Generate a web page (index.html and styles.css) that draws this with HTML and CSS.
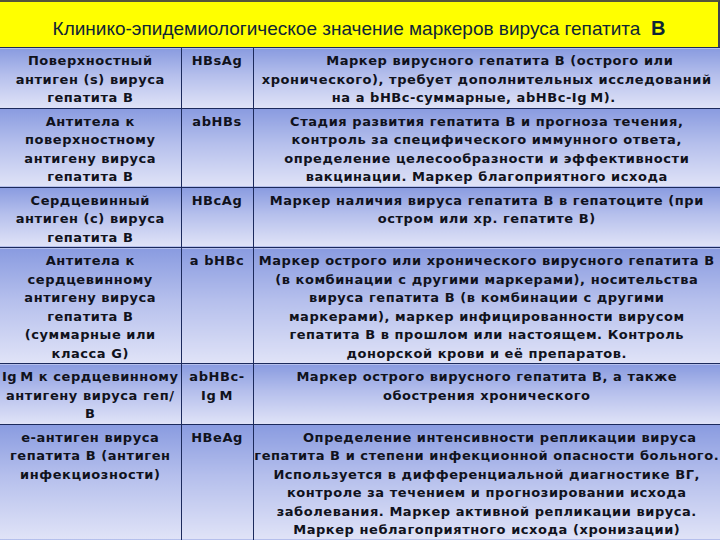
FILE: index.html
```html
<!DOCTYPE html>
<html lang="ru">
<head>
<meta charset="utf-8">
<title>Маркеры вируса гепатита В</title>
<link rel="stylesheet" href="styles.css">
</head>
<body>
<div class="slide">
  <header class="title">Клинико-эпидемиологическое значение маркеров вируса гепатита&nbsp; <b>В</b></header>
  <table class="markers">
    <colgroup>
      <col class="c-name">
      <col class="c-code">
      <col class="c-desc">
    </colgroup>
    <tbody>
      <tr class="r3">
        <td>Поверхностный<br>антиген (s) вируса<br>гепатита В</td>
        <td>HBsAg</td>
        <td><span class="shift">Маркер вирусного гепатита В (острого или</span><br>хронического), требует дополнительных исследований<br><span class="unshift">на a bHBc-суммарные, abHBc-Ig&#8201;M).</span></td>
      </tr>
      <tr>
        <td>Антитела к<br>поверхностному<br>антигену вируса<br>гепатита В</td>
        <td>abHBs</td>
        <td>Стадия развития гепатита В и прогноза течения,<br>контроль за специфического иммунного ответа,<br>определение целесообразности и эффективности<br>вакцинации. Маркер благоприятного исхода</td>
      </tr>
      <tr>
        <td>Сердцевинный<br>антиген (с) вируса<br>гепатита В</td>
        <td>HBcAg</td>
        <td>Маркер наличия вируса гепатита В в гепатоците (при<br>остром или хр. гепатите В)</td>
      </tr>
      <tr>
        <td>Антитела к<br>сердцевинному<br>антигену вируса<br>гепатита В<br>(суммарные или<br>класса G)</td>
        <td>a bHBc</td>
        <td>Маркер острого или хронического вирусного гепатита В<br>(в комбинации с другими маркерами), носительства<br>вируса гепатита В (в комбинации с другими<br>маркерами), маркер инфицированности вирусом<br>гепатита В в прошлом или настоящем. Контроль<br>донорской крови и её препаратов.</td>
      </tr>
      <tr>
        <td>Ig&#8201;M к сердцевинному<br>антигену вируса геп/<br>В</td>
        <td>abHBc-<br>Ig&#8201;M</td>
        <td>Маркер острого вирусного гепатита В, а также<br>обострения хронического</td>
      </tr>
      <tr>
        <td>е-антиген вируса<br>гепатита В (антиген<br>инфекциозности)</td>
        <td>HBeAg</td>
        <td><span class="shift">Определение интенсивности репликации вируса</span><br>гепатита В и степени инфекционной опасности больного.<br>Используется в дифференциальной диагностике ВГ,<br>контроле за течением и прогнозировании исхода<br>заболевания. Маркер активной репликации вируса.<br>Маркер неблагоприятного исхода (хронизации)</td>
      </tr>
    </tbody>
  </table>
</div>
</body>
</html>
```

FILE: styles.css
```css
html, body {
  margin: 0;
  padding: 0;
  background: #dfe2f6;
}

body {
  width: 720px;
  height: 540px;
  overflow: hidden;
}

.slide {
  width: 720px;
  height: 540px;
  overflow: hidden;
}

.title {
  box-sizing: border-box;
  height: 47px;
  padding-top: 16px;
  background: #ffff00;
  border-top: 2px solid #55553a;
  border-right: 2px solid #3e4150;
  font-family: "Liberation Sans", Arial, sans-serif;
  font-size: 19px;
  line-height: 20px;
  color: #0f2536;
  text-align: center;
  white-space: nowrap;
}

.title b {
  font-size: 20px;
}

.markers {
  width: 720px;
  border-collapse: collapse;
  table-layout: fixed;
  font-family: "DejaVu Sans", Verdana, sans-serif;
  font-weight: bold;
  font-size: 13px;
  letter-spacing: 0.55px;
  line-height: 18.5px;
  color: #10121c;
}

.c-name { width: 181px; }
.c-code { width: 72px; }
.c-desc { width: 467px; }

.markers td {
  border: 1px solid #1c2a5c;
  padding: 4px 0 0;
  vertical-align: top;
  text-align: center;
  white-space: nowrap;
  overflow: hidden;
  background: linear-gradient(to bottom, #899be0 0%, #b5bfec 45%, #e0e3f7 100%);
}

.markers tr td:first-child { border-left: none; }
.markers tr td:last-child { border-right: none; }

.shift { padding-left: 26px; }
.unshift { padding-right: 26px; }
```
